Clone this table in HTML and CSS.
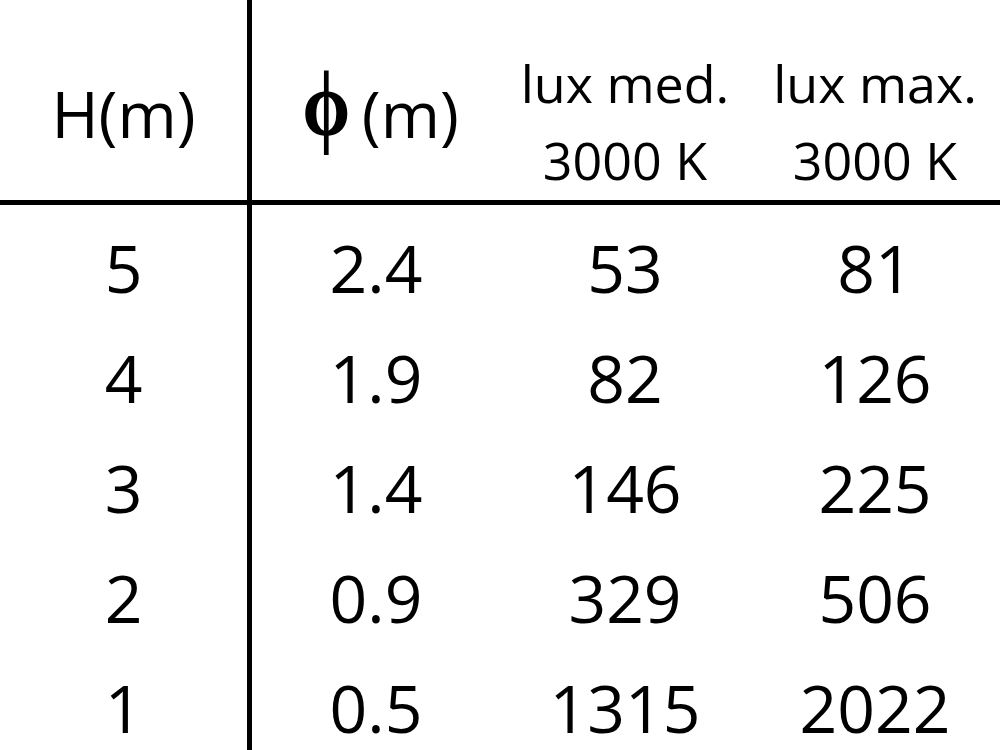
FILE: index.html
```html
<!DOCTYPE html>
<html>
<head>
<meta charset="utf-8">
<link rel="stylesheet" href="styles.css">
</head>
<body>
<div class="table">
  <div class="head">
    <div class="cell hcell first"><span class="big">H(m)</span></div>
    <div class="cell hcell phicell"><span class="phi">ϕ</span><span class="big">(m)</span></div>
    <div class="cell hcell small"><span>lux med.</span><span>3000 K</span></div>
    <div class="cell hcell small"><span>lux max.</span><span>3000 K</span></div>
  </div>
  <div class="body">
    <div class="row"><div class="cell first">5</div><div class="cell">2.4</div><div class="cell">53</div><div class="cell">81</div></div>
    <div class="row"><div class="cell first">4</div><div class="cell">1.9</div><div class="cell">82</div><div class="cell">126</div></div>
    <div class="row"><div class="cell first">3</div><div class="cell">1.4</div><div class="cell">146</div><div class="cell">225</div></div>
    <div class="row"><div class="cell first">2</div><div class="cell">0.9</div><div class="cell">329</div><div class="cell">506</div></div>
    <div class="row"><div class="cell first">1</div><div class="cell">0.5</div><div class="cell">1315</div><div class="cell">2022</div></div>
  </div>
</div>
</body>
</html>
```
FILE: styles.css
```css
html, body {
  margin: 0;
  padding: 0;
  background: #ffffff;
}
body {
  width: 1000px;
  height: 750px;
  overflow: hidden;
  font-family: "Open Sans", "Liberation Sans", sans-serif;
  color: #000000;
}
.table {
  width: 1000px;
}
.head {
  display: grid;
  grid-template-columns: 252px 248px 250px 250px;
  height: 200px;
  border-bottom: 5px solid #000;
}
.row {
  display: grid;
  grid-template-columns: 252px 248px 250px 250px;
  height: 110px;
}
.row:first-child {
  height: 117px;
}
.row:first-child .cell {
  padding-top: 7px;
}
.cell {
  display: flex;
  justify-content: center;
  align-items: center;
  font-size: 66px;
  line-height: 110px;
}
.first {
  border-right: 5px solid #000;
}
.hcell {
  align-items: flex-start;
  padding-top: 70px;
  box-sizing: border-box;
}
.phicell {
  align-items: baseline;
  padding-top: 63px;
  padding-left: 4px;
}
.big {
  font-size: 64px;
  line-height: 87px;
}
.phi {
  display: inline-block;
  font-family: "Liberation Serif", "DejaVu Serif", serif;
  font-weight: bold;
  font-size: 94px;
  line-height: 87px;
  margin-right: 6px;
  position: relative;
  top: -3px;
  transform: scaleX(0.82);
}
.small {
  flex-direction: column;
  align-items: center;
  padding-top: 41px;
  font-size: 52px;
  line-height: 77px;
}
.small span {
  display: block;
}
```
